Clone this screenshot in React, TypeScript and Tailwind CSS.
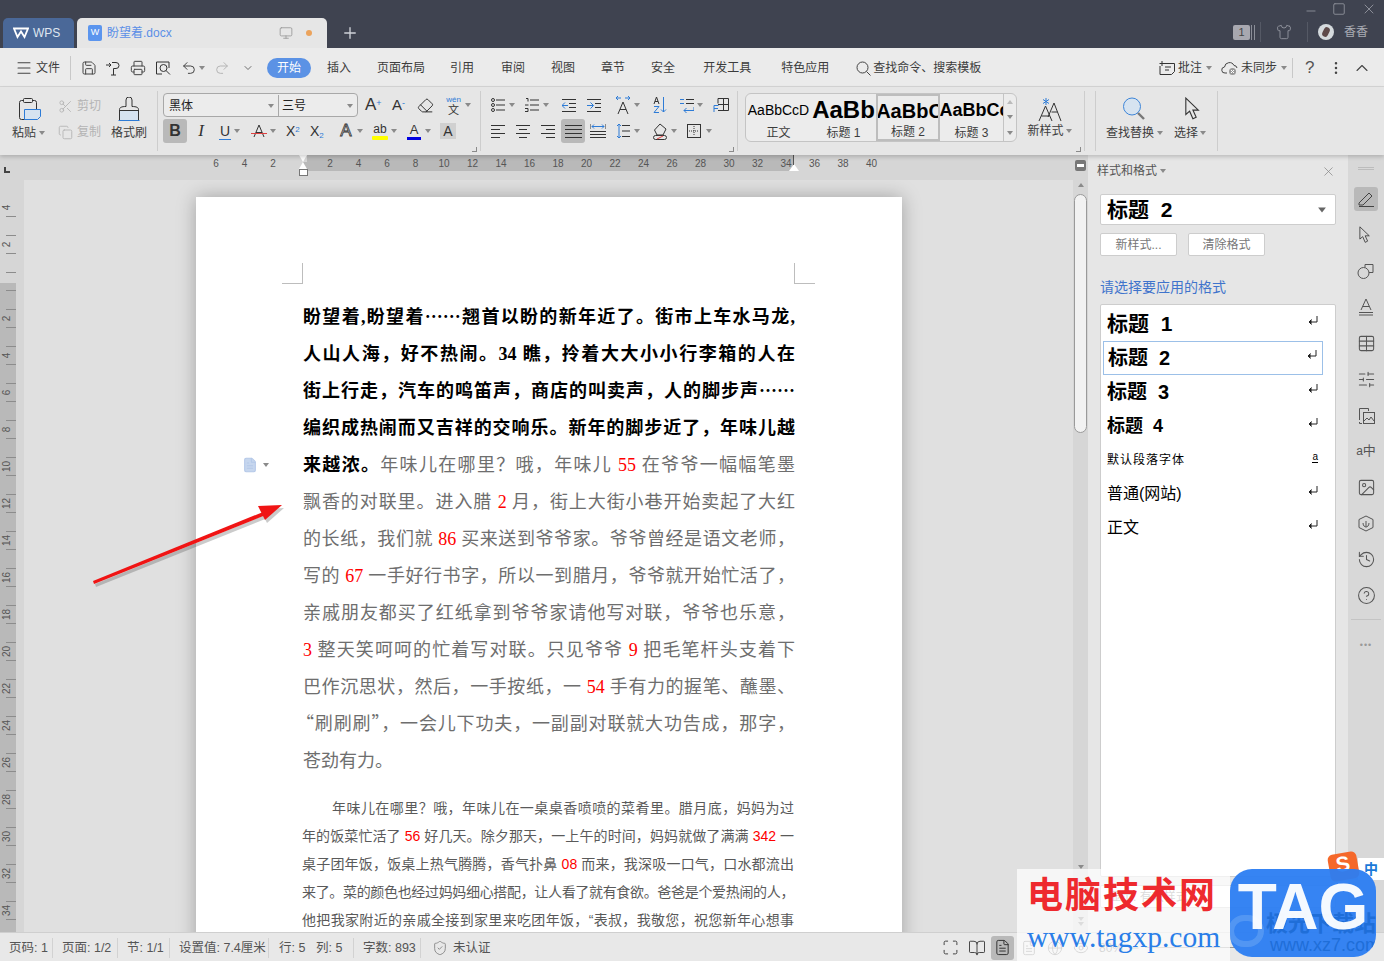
import type { ReactNode } from "react"
import {
  BookOpen,
  ChevronDown,
  ChevronUp,
  CircleHelp,
  EllipsisVertical,
  Eraser,
  Eye,
  FileText,
  Globe,
  History,
  Image as ImageIcon,
  Menu,
  Minus,
  Monitor,
  Plus,
  Printer,
  Redo2,
  Save,
  Scissors,
  Shirt,
  ShieldCheck,
  SlidersHorizontal,
  Square,
  Table,
  Undo2,
  X,
  Copy,
  Maximize,
} from "lucide-react"

const cjk = "font-['Liberation_Sans','Noto_Sans_CJK_SC',sans-serif]"
const serif = "font-['Liberation_Serif','Noto_Sans_CJK_SC',serif]"
const cjkOnly = "font-['Noto_Sans_CJK_SC',sans-serif] leading-[0]"
const BLUE = "#2d7bd6"

function Caret({ className = "" }: { className?: string }) {
  return <span className={`inline-block h-0 w-0 shrink-0 border-x-[3px] border-t-[4px] border-x-transparent border-t-[#8a8a8a] ${className}`} />
}

function R({ children }: { children: ReactNode }) {
  return <span className="text-[#ff0000]">{children}</span>
}

function Corner({ className = "" }: { className?: string }) {
  return <span className={`absolute h-[5px] w-[5px] border-b border-r border-[#8a8a8a] ${className}`} />
}

function Ico({ w = 16, h = 16, className = "", children }: { w?: number; h?: number; className?: string; children: ReactNode }) {
  return (
    <svg width={w} height={h} viewBox={`0 0 ${w} ${h}`} fill="none" stroke="#333" strokeWidth="1" className={`shrink-0 ${className}`}>
      {children}
    </svg>
  )
}

function Lines({ d, w = 14, className = "" }: { d: string; w?: number; className?: string }) {
  return (
    <Ico w={w} h={16} className={className}>
      <path d={d} />
    </Ico>
  )
}

function PasteIcon() {
  return (
    <svg width="24" height="24" viewBox="0 0 24 24" fill="none" className="ml-[6px]">
      <rect x="1.5" y="3.5" width="17" height="19" rx="2" stroke="#333" />
      <rect x="5.5" y="1.5" width="9" height="4" rx="1" fill="#e6e6e6" stroke="#333" />
      <path d="M6.5 12.5h16v7l-3 3h-13Z" fill="#d6e3f0" stroke={BLUE} />
    </svg>
  )
}

function BrushIcon() {
  return (
    <svg width="24" height="24" viewBox="0 0 24 24" fill="none">
      <rect x="2" y="13" width="20" height="10" fill="#d6e3f0" />
      <path d="M1.5 23.5h21" stroke={BLUE} />
      <path d="M2.5 23V12.5c0-2 2-3 6.5-3V3a3 3 0 0 1 6 0v6.5c4.500 0 6.500 1 6.500 3V23M2.500 13.500h19" stroke="#333" />
    </svg>
  )
}

function CursorIcon({ size = 22, className = "" }: { size?: number; className?: string }) {
  return (
    <svg width={size} height={size} viewBox="0 0 22 22" fill="none" stroke="#333" strokeWidth="1" className={`shrink-0 ${className}`}>
      <path d="M3.500 1v15l3.500-3 3 7 3-1.500-3-6.500h5Z" />
    </svg>
  )
}

function WpsLogo() {
  return (
    <svg width="16" height="12" viewBox="0 0 16 12" fill="none" stroke="#fff" strokeWidth="1.8">
      <path d="M1 1.500h14L11.500 10 8 4.500 4.500 10 1 1.500Z" />
    </svg>
  )
}

function ReturnMark() {
  return (
    <svg width="10" height="10" viewBox="0 0 10 10" fill="none" stroke="#222" strokeWidth="1" className="mb-[6px]">
      <path d="M9 0v6H1.500" />
      <path d="M3.500 3.500 1 6l2.500 2.500" fill="#222" />
    </svg>
  )
}

function Lab({ children, className = "" }: { children: ReactNode; className?: string }) {
  return <span className={`shrink-0 whitespace-nowrap text-[12px] leading-[14px] text-[#3c3c3c] ${className}`}>{children}</span>
}

function TitleBar() {
  return (
    <div className="flex h-12 shrink-0 justify-between bg-[#3f4350]">
      <div className="flex items-end pl-[3px]">
        <div className="flex h-[30px] w-[71px] items-center rounded-t-[5px] bg-[#4a6898] pl-[10px]">
          <WpsLogo />
          <span className="ml-[4px] text-[12px] text-[#dfe6f0]">WPS</span>
        </div>
        <div className="ml-[3px] flex h-[30px] w-[250px] items-center rounded-t-[5px] bg-[#e6e6e6] pl-[11px]">
          <span className="flex h-4 w-[14px] items-center justify-center rounded-[2px] bg-[#5b95ee] text-[9px] text-white">W</span>
          <span className="ml-[5px] text-[12px] text-[#5b8fe6]">盼望着.docx</span>
          <Monitor size={14} strokeWidth={1.5} className="ml-[107px] text-[#9a9a9a]" />
          <span className="ml-[13px] h-[6px] w-[6px] rounded-full bg-[#eba35c]" />
        </div>
        <Plus size={18} strokeWidth={1.8} className="mb-[6px] ml-[14px] text-[#cfd2d8]" />
      </div>
      <div className="flex flex-col items-end pr-[7px]">
        <div className="flex h-[19px] items-start pt-[2px] text-[#8b8e98]">
          <Minus size={14} strokeWidth={1.6} className="mt-[2px]" />
          <Square size={14} strokeWidth={1.6} className="ml-[14px]" />
          <X size={16} strokeWidth={1.5} className="ml-[15px] -mt-px" />
        </div>
        <div className="mt-[3px] flex h-[20px] items-center pr-[9px]">
          <span className="flex h-[15px] w-[17px] items-center justify-center rounded-[2px] bg-[#a8a8b0] text-[11px] text-[#444]">1</span>
          <span className="ml-[1px] h-[15px] w-[4px] border-x border-[#8b8e98]" />
          <span className="ml-[5px] h-[20px] w-px bg-[#555965]" />
          <Shirt size={16} strokeWidth={1.5} className="ml-[15px] text-[#8b8e98]" />
          <span className="ml-[15px] h-[20px] w-px bg-[#555965]" />
          <span className="ml-[10px] flex h-4 w-4 items-center justify-center overflow-hidden rounded-full bg-[#d5dadd]">
            <span className="h-[10px] w-[6px] rotate-[25deg] rounded-full bg-[#5e4a4a]" />
          </span>
          <span className="ml-[10px] text-[12px] text-[#a8abb3]">香香</span>
        </div>
      </div>
    </div>
  )
}

function MenuRow() {
  const ic = "shrink-0 text-[#444]"
  return (
    <div className="flex h-[39px] shrink-0 items-center border-b border-[#d6d6d6] bg-[#ebebeb] pl-4 pr-[14px] pt-[2px]">
      <Menu size={18} strokeWidth={1.4} className={`-mx-px ${ic}`} />
      <Lab className="ml-[4px]">文件</Lab>
      <span className="ml-[10px] h-[24px] w-px bg-[#c8c8c8]" />
      <Save size={16} strokeWidth={1.5} className={`ml-[10px] ${ic}`} />
      <Ico w={15} h={16} className="ml-[8px]">
        <path d="M1 5h5M4 3l2 2-2 2M7 2.500h4a3 3 0 0 1 0 6H8.500V15M6 15h5" />
      </Ico>
      <Printer size={16} strokeWidth={1.5} className={`ml-[10px] ${ic}`} />
      <Ico w={16} h={16} className="ml-[9px]">
        <path d="M14 8V2H1.500v12H7" />
        <circle cx="8.500" cy="8" r="3.500" />
        <path d="m11 10.500 4 4" />
      </Ico>
      <Undo2 size={16} strokeWidth={1.5} className={`ml-[10px] ${ic}`} />
      <Caret className="ml-[2px]" />
      <Redo2 size={16} strokeWidth={1.5} className="ml-[9px] shrink-0 text-[#b5b5b5]" />
      <ChevronDown size={12} strokeWidth={1.5} className={`ml-[12px] ${ic}`} />
      <span className="ml-[13px] flex h-5 w-11 shrink-0 items-center justify-center rounded-full bg-[#5b92e5] text-[12px] text-white">开始</span>
      <Lab className="ml-4">插入</Lab>
      <Lab className="ml-[26px]">页面布局</Lab>
      <Lab className="ml-[25px]">引用</Lab>
      <Lab className="ml-[27px]">审阅</Lab>
      <Lab className="ml-[26px]">视图</Lab>
      <Lab className="ml-[26px]">章节</Lab>
      <Lab className="ml-[26px]">安全</Lab>
      <Lab className="ml-[28px]">开发工具</Lab>
      <Lab className="ml-[30px]">特色应用</Lab>
      <Ico w={15} h={15} className="ml-[27px]">
        <circle cx="6.500" cy="6.500" r="5.500" stroke="#444" />
        <path d="m10.500 10.500 4 4" stroke="#444" />
      </Ico>
      <Lab className="ml-[2px]">查找命令、搜索模板</Lab>
      <div className="ml-auto flex items-center">
        <Ico w={16} h={15}>
          <path d="M4 2.500h11.500v8l-3 3H1V5M3 0v5M.5 2.500h5M6 6h6M6 9h4" />
        </Ico>
        <Lab className="ml-[3px]">批注</Lab>
        <Caret className="ml-[4px]" />
        <Ico w={18} h={16} className="ml-[9px]">
          <path d="M6 13H4a3 3 0 0 1-.5-6A5 5 0 0 1 13 5.500a3 3 0 0 1 3 2.500" stroke="#444" />
          <circle cx="11.500" cy="11.500" r="3.500" fill="#999" stroke="none" />
          <path d="m10 10 3 3m0-3-3 3" stroke="#fff" />
        </Ico>
        <Lab className="ml-[2px]">未同步</Lab>
        <Caret className="ml-[4px]" />
        <span className="ml-[5px] h-5 w-px bg-[#c8c8c8]" />
        <span className="ml-[12px] w-[10px] text-[17px] leading-4 text-[#555]">?</span>
        <EllipsisVertical size={16} strokeWidth={1.8} className={`ml-[13px] ${ic}`} />
        <ChevronUp size={20} strokeWidth={1.3} className={`ml-[8px] -mr-[2px] ${ic}`} />
      </div>
    </div>
  )
}

function StyleCell({ w, label, active, children }: { w: string; label: string; active?: boolean; children: ReactNode }) {
  return (
    <div className={`flex h-full shrink-0 flex-col items-center overflow-hidden ${w} ${active ? "border-2 border-[#bdbdbd]" : ""}`}>
      <div className={`flex w-full items-center justify-center overflow-hidden whitespace-nowrap text-black ${active ? "h-[30px]" : "h-[32px]"}`}>{children}</div>
      <Lab className="text-[11px]">{label}</Lab>
    </div>
  )
}

function Toolbar() {
  const dim = "text-[#b4b4b4]"
  const outlineA = "text-[#e6e6e6] [-webkit-text-stroke:0.8px_#333]"
  return (
    <div className="relative z-10 flex h-[68px] shrink-0 bg-[#e6e6e6] shadow-[0_2px_4px_rgba(0,0,0,0.18)]">
      <div className="flex w-[157px] shrink-0 pt-[10px]">
        <div className="ml-3 flex w-[34px] flex-col">
          <PasteIcon />
          <div className="mt-[5px] flex items-center">
            <Lab>粘贴</Lab>
            <Caret className="ml-[3px]" />
          </div>
        </div>
        <div className="ml-3 flex w-[43px] flex-col">
          <div className="mt-px flex h-4 items-center">
            <Scissors size={15} strokeWidth={1.4} className={dim} />
            <span className={`ml-[4px] text-[12px] ${dim}`}>剪切</span>
          </div>
          <div className="mt-[10px] flex h-4 items-center">
            <Copy size={15} strokeWidth={1.4} className={dim} />
            <span className={`ml-[4px] text-[12px] ${dim}`}>复制</span>
          </div>
        </div>
        <div className="ml-[10px] flex w-9 flex-col items-center">
          <BrushIcon />
          <Lab className="mt-[5px]">格式刷</Lab>
        </div>
      </div>
      <span className="mt-1 h-[60px] w-px bg-[#cdcdcd]" />

      <div className="relative flex w-[322px] shrink-0 flex-col gap-[2px] pt-[6px]">
        <div className="flex h-6 items-center">
          <div className="ml-[5px] flex h-6 w-[195px] rounded-[4px] border border-[#a8a8a8] bg-[#ececec] pt-px text-[12px] text-[#222]">
            <div className="flex w-[115px] items-center justify-between border-r border-[#a8a8a8] pl-[5px] pr-[4px]">
              黑体
              <Caret />
            </div>
            <div className="flex flex-1 items-center justify-between pl-[3px] pr-[4px]">
              三号
              <Caret />
            </div>
          </div>
          <span className="ml-[7px] w-[17px] text-[17px] font-light leading-6 text-[#333]">
            A<sup className="text-[9px] text-[#2d7bd6]">+</sup>
          </span>
          <span className="ml-[10px] w-[14px] text-[15px] leading-6 text-[#333]">
            A<sup className="text-[9px] text-[#2d7bd6]">-</sup>
          </span>
          <Eraser size={17} strokeWidth={1.4} className="-mx-px ml-[11px] shrink-0 text-[#333]" />
          <div className="ml-[13px] flex w-[15px] flex-col items-center">
            <span className="text-[8px] leading-[9px] text-[#2d7bd6]">wén</span>
            <span className="text-[11px] leading-[12px] text-[#333]">文</span>
          </div>
          <Caret className="ml-[4px]" />
        </div>
        <div className="flex h-6 items-center text-[#333]">
          <span className="ml-[5px] flex h-6 w-6 items-center justify-center rounded-[3px] bg-[#b9b9b9] text-[16px] font-bold">B</span>
          <span className="ml-2 w-3 text-center font-['Liberation_Serif',serif] text-[17px] italic">I</span>
          <span className="ml-3 w-3 border-b border-[#2d7bd6] text-center text-[14px] leading-[16px]">U</span>
          <Caret className="ml-[3px]" />
          <Ico className="ml-[11px]">
            <path d="M3 14 8 2l5 12M5 9.500h6" />
            <path d="M0 10.500h16" stroke="#e04040" />
          </Ico>
          <Caret className="ml-[3px]" />
          <span className="ml-[10px] w-4 text-[14px] leading-5">
            X<sup className="text-[8px] text-[#2d7bd6]">2</sup>
          </span>
          <span className="ml-2 w-[17px] text-[14px] leading-5">
            X<sub className="text-[8px] text-[#2d7bd6]">2</sub>
          </span>
          <span className={`ml-3 w-[14px] text-center text-[17px] leading-5 ${outlineA}`}>A</span>
          <Caret className="ml-[4px]" />
          <span className="ml-[9px] flex w-4 flex-col items-center">
            <span className="text-[12px] leading-[13px]">ab</span>
            <span className="h-[4px] w-4 rounded-[1px] bg-[#ffff00]" />
          </span>
          <Caret className="ml-[3px]" />
          <span className="ml-[10px] flex w-[14px] flex-col items-center">
            <span className="text-[13px] leading-[14px]">A</span>
            <span className="h-[3px] w-[14px] bg-[#0000e0]" />
          </span>
          <Caret className="ml-[4px]" />
          <span className="ml-[9px] flex h-[16px] w-4 items-center justify-center bg-[#d0d0d0] text-[14px]">A</span>
        </div>
        <Corner className="bottom-[3px] right-[3px]" />
      </div>
      <span className="mt-1 h-[60px] w-px bg-[#cdcdcd]" />

      <div className="relative flex w-[256px] shrink-0 flex-col gap-[2px] pt-[6px]">
        <div className="flex h-6 items-center">
          <Ico w={14} className="ml-[10px]">
            <circle cx="2" cy="3" r="1.500" />
            <circle cx="2" cy="8" r="1.500" />
            <circle cx="2" cy="13" r="1.500" />
            <path d="M5 3h9M5 8h9M5 13h9" />
          </Ico>
          <Caret className="ml-[4px]" />
          <Ico w={14} className="ml-[10px]">
            <path d="M1 1.500h2v3M0 8h3.500M0 11.500h3v3H0M5 3h9M5 8h9M5 13h9" />
          </Ico>
          <Caret className="ml-[4px]" />
          <Ico w={14} className="ml-[13px]">
            <path d="M0 2.500h14M7 6.500h7M7 10.500h7M0 14.500h14" />
            <path d="M0 8.500h6M3 5.500l-3 3 3 3" stroke={BLUE} />
          </Ico>
          <Ico w={14} className="ml-[11px]">
            <path d="M0 2.500h14M8 6.500h6M8 10.500h6M0 14.500h14" />
            <path d="M0 8.500h6M3.500 5.500l3 3-3 3" stroke={BLUE} />
          </Ico>
          <Ico h={20} className="ml-[14px]">
            <path d="M3 19 8 7l5 12M5 14.500h6" />
            <path d="M1 3h5M3 1 1 3l2 2M10 3h5M13 1l2 2-2 2" stroke={BLUE} />
          </Ico>
          <Caret className="ml-[3px]" />
          <Ico w={14} h={18} className="ml-[13px]">
            <path d="M1 8 3.500 1 6 8M2 5.500h3" />
            <path d="M1 10.500h5l-5 6h5M10.500 1v15M8 13.500l2.500 2.500 2.500-2.500" stroke={BLUE} />
          </Ico>
          <Ico w={14} h={18} className="ml-[13px]">
            <path d="M6 3.500h8M6 7.500h8" />
            <path d="M0 3.500h4M0 7.500h4M14 11v3.500H4M6.500 12 4 14.500 6.500 17" stroke={BLUE} />
          </Ico>
          <Caret className="ml-[3px]" />
          <Ico h={16} className="ml-[10px]">
            <path d="M5 1.500h10.500v12H5M5 1.500v5M5 7.500h10.500M10.500 1.500v12" />
            <path d="M1 15V8.500h4.500M1 11.500h4" stroke={BLUE} />
          </Ico>
        </div>
        <div className="flex h-6 items-center">
          <Lines d="M0 2.500h14M0 6.500h9M0 10.500h14M0 14.500h9" className="ml-[10px]" />
          <Lines d="M0 2.500h14M3 6.500h8M0 10.500h14M3 14.500h8" className="ml-[11px]" />
          <Lines d="M0 2.500h14M5 6.500h9M0 10.500h14M5 14.500h9" className="ml-[11px]" />
          <span className="ml-[6px] flex h-6 w-6 items-center justify-center rounded-[3px] bg-[#b9b9b9]">
            <Lines w={17} d="M0 2.500h17M0 6.500h17M0 10.500h17M0 14.500h17" />
          </span>
          <Ico className="ml-[5px]">
            <path d="M0 1v5M16 1v5" />
            <path d="M2 3.500h12M4 1.500l-2 2 2 2M12 1.500l2 2-2 2" stroke={BLUE} />
            <path d="M0 8.500h16M0 11.500h16M0 14.500h16" />
          </Ico>
          <Ico w={14} h={18} className="ml-[10px]">
            <path d="M3 2v14M1 4l2-2 2 2M1 14l2 2 2-2" stroke={BLUE} />
            <path d="M6 3.500h8M6 9h8M6 14.500h8" />
          </Ico>
          <Caret className="ml-[4px]" />
          <Ico h={20} className="ml-3">
            <path d="M2.500 9 8 3l6 5-3 6H5Z" />
            <rect x="1.500" y="14.500" width="13" height="4" rx="2" />
            <path d="m5 18 6-3" stroke="#e04040" />
          </Ico>
          <Caret className="ml-[3px]" />
          <Ico className="ml-[9px]">
            <rect x="1.500" y="1.500" width="13" height="13" />
            <path d="M8 3v10M3 8h10" strokeDasharray="1 1" />
          </Ico>
          <Caret className="ml-[4px]" />
        </div>
        <Corner className="bottom-[3px] right-[3px]" />
      </div>
      <span className="mt-1 h-[60px] w-px bg-[#cdcdcd]" />

      <div className="relative flex w-[346px] shrink-0 pt-[6px]">
        <div className="ml-[7px] flex h-[49px] w-[272px] overflow-hidden rounded-[6px] border border-[#c4c4c4] bg-[#ececec]">
          <StyleCell w="w-[65px]" label="正文">
            <span className="text-[14px]">AaBbCcD</span>
          </StyleCell>
          <StyleCell w="w-[65px]" label="标题 1">
            <span className="text-[24px] font-bold">AaBb</span>
          </StyleCell>
          <StyleCell w="w-[64px]" label="标题 2" active>
            <span className="ml-[3px] text-[20px] font-bold">AaBbC</span>
          </StyleCell>
          <StyleCell w="w-[63px]" label="标题 3">
            <span className="ml-[6px] text-[18px] font-bold">AaBbCc</span>
          </StyleCell>
          <div className="flex w-[13px] flex-col items-center justify-around border-l border-[#c4c4c4]">
            <Caret className="rotate-180 opacity-50" />
            <Caret />
            <Caret />
          </div>
        </div>
        <div className="ml-[10px] flex w-[45px] flex-col items-center pt-[3px]">
          <Ico w={24} h={26} className="-mb-[1px]">
            <path d="M1 25 7.500 10 14 25M3.500 20h8M10 21l6-14 7 18M13.500 16h6" />
            <path d="M8 2v7M5 3.500l6 4M11 3.500l-6 4" stroke={BLUE} />
          </Ico>
          <div className="mt-[3px] flex items-center">
            <Lab>新样式</Lab>
            <Caret className="ml-[2px]" />
          </div>
        </div>
        <Corner className="bottom-[3px] right-[3px]" />
      </div>
      <span className="mt-1 h-[60px] w-px bg-[#cdcdcd]" />
      <span className="ml-[10px] mt-1 h-[60px] w-px bg-[#cdcdcd]" />

      <div className="flex w-[121px] shrink-0 pt-[10px]">
        <div className="ml-[10px] flex w-[58px] flex-col">
          <svg width="24" height="24" viewBox="0 0 24 24" fill="none" className="ml-[16px]">
            <circle cx="10" cy="9.500" r="8.500" fill="#d6e3f0" stroke="#3d85d8" />
            <path d="m16 16 6 6" stroke="#777" strokeWidth="2.400" />
          </svg>
          <div className="mt-[5px] flex items-center">
            <Lab>查找替换</Lab>
            <Caret className="ml-[3px]" />
          </div>
        </div>
        <div className="ml-[10px] flex w-[32px] flex-col">
          <CursorIcon size={24} className="ml-[8px]" />
          <div className="mt-[5px] flex items-center">
            <Lab>选择</Lab>
            <Caret className="ml-[2px]" />
          </div>
        </div>
      </div>
      <span className="mt-1 h-[60px] w-px bg-[#cdcdcd]" />
    </div>
  )
}

const hNums = ["6", "4", "2", "", "2", "4", "6", "8", "10", "12", "14", "16", "18", "20", "22", "24", "26", "28", "30", "32", "34", "36", "38", "40"]
const vNums = ["4", "2", "", "2", "4", "6", "8", "10", "12", "14", "16", "18", "20", "22", "24", "26", "28", "30", "32", "34", "36"]

function HRuler() {
  return (
    <div className="relative h-[25px] shrink-0 bg-[#d6d6d6]">
      <div className="flex h-4">
        <div className="w-[303px] shrink-0" />
        <div className="w-[491px] shrink-0 bg-[#b9b9b9]" />
      </div>
      <div className="absolute left-[201.75px] top-0 flex h-4 items-center">
        {hNums.map((n, i) => (
          <span key={i} className="w-[28.5px] text-center text-[10px] text-[#555]">
            {n}
          </span>
        ))}
      </div>
      <span className="absolute left-[4px] top-[12px] h-[6px] w-[6px] border-b-2 border-l-2 border-[#444]" />
      <div className="absolute left-[298px] top-0 flex w-[10px] flex-col items-center">
        <span className="h-0 w-0 border-x-[4px] border-t-[7px] border-x-[#d6d6d6] border-t-white" />
        <span className="h-0 w-0 border-x-[4px] border-b-[7px] border-x-transparent border-b-white" />
        <span className="h-[7px] w-[9px] border border-[#777] bg-white" />
      </div>
      <span className="absolute left-[789px] top-[9px] h-0 w-0 border-x-[5px] border-b-[7px] border-x-transparent border-b-white" />
      <span className="absolute left-[793px] top-0 h-[10px] w-px bg-[#555]" />
    </div>
  )
}

function VRulerMarks() {
  return (
    <div className="absolute left-0 top-[18.75px] w-4">
      {vNums.map((n, i) => (
        <div key={i}>
          <div className="ml-[6px] flex h-[18.5px] items-center justify-center border-b border-[#8c8c8c]">
            <span className="-ml-[8px] -rotate-90 text-[10px] text-[#555]">{n}</span>
          </div>
          <div className="ml-[6px] h-[18.5px] border-b border-[#8c8c8c]" />
        </div>
      ))}
    </div>
  )
}

function Line({ children, bold, last }: { children: ReactNode; bold?: boolean; last?: boolean }) {
  return <div className={`h-[37px] whitespace-nowrap ${last ? "" : "[text-align-last:justify]"} ${bold ? "font-bold text-black" : ""}`}>{children}</div>
}

function SmallLine({ children, first, tight }: { children: ReactNode; first?: boolean; tight?: boolean }) {
  return <div className={`h-7 whitespace-nowrap [text-align-last:justify] ${first ? "pl-[30px]" : ""} ${tight ? "tracking-[-0.4px]" : ""}`}>{children}</div>
}

function Page() {
  return (
    <div className={`relative ml-[172px] mt-[17px] min-h-[900px] w-[706px] bg-white shadow-[0_0_18px_rgba(0,0,0,0.28)] ${serif}`}>
      <div className="flex pt-[66px]">
        <span className="ml-[86px] h-[21px] w-[21px] border-b border-r border-[#bdbdbd]" />
        <span className="ml-[491px] h-[21px] w-[21px] border-b border-l border-[#bdbdbd]" />
      </div>
      <div className="ml-[107px] mt-[15px] w-[492px] text-[18px] leading-[37px] text-[#6e6e6e]">
        <Line bold>
          盼望着,盼望着<span className={cjkOnly}>……</span>翘首以盼的新年近了。街市上车水马龙,
        </Line>
        <Line bold>人山人海，好不热闹。34 瞧，拎着大大小小行李箱的人在</Line>
        <Line bold>
          街上行走，汽车的鸣笛声，商店的叫卖声，人的脚步声<span className={cjkOnly}>……</span>
        </Line>
        <Line bold>编织成热闹而又吉祥的交响乐。新年的脚步近了，年味儿越</Line>
        <Line>
          <b className="text-black">来越浓。</b>年味儿在哪里？哦，年味儿 <R>55</R> 在爷爷一幅幅笔墨
        </Line>
        <Line>
          飘香的对联里。进入腊 <R>2</R> 月，街上大街小巷开始卖起了大红
        </Line>
        <Line>
          的长纸，我们就 <R>86</R> 买来送到爷爷家。爷爷曾经是语文老师，
        </Line>
        <Line>
          写的 <R>67</R> 一手好行书字，所以一到腊月，爷爷就开始忙活了，
        </Line>
        <Line>亲戚朋友都买了红纸拿到爷爷家请他写对联，爷爷也乐意，</Line>
        <Line>
          <R>3</R> 整天笑呵呵的忙着写对联。只见爷爷 <R>9</R> 把毛笔杆头支着下
        </Line>
        <Line>
          巴作沉思状，然后，一手按纸，一 <R>54</R> 手有力的握笔、蘸墨、
        </Line>
        <Line>
          <span className={`-ml-[7px] ${cjkOnly}`}>“</span>刷刷刷<span className={cjkOnly}>”</span>，一会儿下功夫，一副副对联就大功告成，那字，
        </Line>
        <Line last>苍劲有力。</Line>
      </div>
      <div className={`ml-[106px] mt-[14px] w-[492px] text-[14px] leading-7 text-[#5a5a5a] ${cjk}`}>
        <SmallLine first>年味儿在哪里？哦，年味儿在一桌桌香喷喷的菜肴里。腊月底，妈妈为过</SmallLine>
        <SmallLine>
          年的饭菜忙活了 <R>56</R> 好几天。除夕那天，一上午的时间，妈妈就做了满满 <R>342</R> 一
        </SmallLine>
        <SmallLine>
          桌子团年饭，饭桌上热气腾腾，香气扑鼻 <R>08</R> 而来，我深吸一口气，口水都流出
        </SmallLine>
        <SmallLine tight>来了。菜的颜色也经过妈妈细心搭配，让人看了就有食欲。爸爸是个爱热闹的人，</SmallLine>
        <SmallLine>他把我家附近的亲戚全接到家里来吃团年饭，“表叔，我敬您，祝您新年心想事</SmallLine>
      </div>
      <div className="absolute left-[46px] top-[260px] flex items-center">
        <FileText size={16} strokeWidth={1.6} className="fill-[#c6d6ee] text-[#b4c8e8]" />
        <Caret className="ml-[5px]" />
      </div>
    </div>
  )
}

function Scrollbar() {
  return (
    <div className="flex w-[15px] shrink-0 flex-col items-center bg-[#d6d6d6]">
      <span className="mt-[5px] flex h-[11px] w-[11px] items-center justify-center rounded-[2px] bg-[#777]">
        <span className="h-[3px] w-[7px] bg-white" />
      </span>
      <Caret className="mt-[12px] rotate-180" />
      <div className="mt-[7px] h-[239px] w-[13px] rounded-full border border-[#9a9a9a] bg-[#f2f2f2]" />
      <Caret className="mt-[432px]" />
      <Caret className="mt-[48px]" />
      <Caret className="mt-px" />
    </div>
  )
}

const styleItems = [
  { label: "标题  1", cls: "text-[21px] font-bold" },
  { label: "标题  2", cls: "text-[20px] font-bold", sel: true },
  { label: "标题  3", cls: "text-[20px] font-bold" },
  { label: "标题  4", cls: "text-[18px] font-bold" },
]

function StylesPanel() {
  return (
    <div className="flex w-[260px] shrink-0 flex-col bg-[#e6e6e6] pl-3 pr-3">
      <div className="mt-[8px] flex h-4 items-center">
        <span className="-ml-[3px] text-[12px] text-[#555]">样式和格式</span>
        <Caret className="ml-[3px]" />
        <X size={15} strokeWidth={1.2} className="ml-auto mr-0 text-[#888]" />
      </div>
      <div className="mt-[15px] flex h-[31px] w-[236px] items-center justify-between rounded-[2px] border border-[#cdcdcd] bg-white pl-[6px] pr-[10px]">
        <span className="text-[21px] font-bold text-black">标题&nbsp;&nbsp;2</span>
        <Caret className="scale-[1.3] border-t-[#666]" />
      </div>
      <div className="mt-2 flex">
        <button className="h-[23px] w-[77px] rounded-[2px] border border-[#cdcdcd] bg-white text-[12px] text-[#777]">新样式...</button>
        <button className="ml-[11px] h-[23px] w-[77px] rounded-[2px] border border-[#cdcdcd] bg-white text-[12px] text-[#777]">清除格式</button>
      </div>
      <div className="mt-[22px] text-[14px] leading-[18px] text-[#3f74cc]">请选择要应用的格式</div>
      <div className="mt-[8px] h-[573px] w-[236px] rounded-[2px] border border-[#cdcdcd] bg-white pt-[2px]">
        {styleItems.map((s, i) => (
          <div key={i} className="flex h-[34px] items-center pr-[12px]">
            <div className={`ml-[2px] flex h-[34px] w-[220px] items-center justify-between pl-[4px] pr-[5px] ${s.sel ? "border border-[#9cc0e8]" : ""}`}>
              <span className={`whitespace-pre text-black ${s.cls}`}>{s.label}</span>
              <ReturnMark />
            </div>
          </div>
        ))}
        <div className="ml-[6px] flex h-[34px] w-[216px] items-center justify-between pr-[5px]">
          <span className="text-[12px] tracking-[1px] text-black">默认段落字体</span>
          <span className="mb-[6px] border-b border-black text-[10px] leading-[10px] text-black">a</span>
        </div>
        <div className="ml-[6px] flex h-[34px] w-[216px] items-center justify-between pr-[5px]">
          <span className="text-[16px] text-black">普通(网站)</span>
          <ReturnMark />
        </div>
        <div className="ml-[6px] flex h-[34px] w-[216px] items-center justify-between pr-[5px]">
          <span className="text-[16px] text-black">正文</span>
          <ReturnMark />
        </div>
      </div>
      <div className="mt-2 flex h-[23px] w-[236px] items-center rounded-[2px] border border-[#cdcdcd] bg-white pl-[8px] text-[12px] text-[#888]">显示: 有效样式</div>
    </div>
  )
}

function SideBar() {
  const c = "text-[#555]"
  const st = "#555"
  const icons = [
    <CursorIcon size={18} />,
    <Ico w={18} h={18}>
      <circle cx="6.500" cy="11" r="5.500" stroke={st} />
      <path d="M8 5.500V2.500h8v8h-4" stroke={st} />
    </Ico>,
    <Ico w={16} h={18}>
      <path d="M3 12 8 1l5 11M5 8.500h6M1 14.500h14M1 17h14" stroke={st} />
    </Ico>,
    <Table size={19} strokeWidth={1.3} className={c} />,
    <SlidersHorizontal size={19} strokeWidth={1.3} className={c} />,
    <Ico w={17} h={17}>
      <path d="M1.500 13V1.500h9V4M1.500 15v1.500H4" stroke={st} />
      <rect x="5.500" y="5.500" width="11" height="11" stroke={st} />
      <path d="m6 14 3-3 2 2 2-3 3 4" stroke={st} />
    </Ico>,
    <span className="flex items-end text-[12px] leading-[14px] text-[#555]">
      a<span className="text-[13px]">中</span>
    </span>,
    <ImageIcon size={19} strokeWidth={1.3} className={c} />,
    <Ico w={16} h={17}>
      <path d="M8 1 15 4.500v8L8 16l-7-3.500v-8Z" stroke={st} />
      <path d="M5 8c0 3 2 4 3 4s3-1 3-4M8 12V6" stroke={st} />
    </Ico>,
    <History size={19} strokeWidth={1.3} className={c} />,
    <CircleHelp size={19} strokeWidth={1.3} className={c} />,
  ]
  return (
    <div className="flex w-9 shrink-0 flex-col items-center bg-[#d8d8d8]">
      <span className="mt-3 h-[3px] w-4 shrink-0 border-y border-[#bcbcbc]" />
      <span className="mt-[17px] flex h-6 w-6 shrink-0 items-center justify-center rounded-[3px] bg-[#b9b9b9]">
        <Ico w={17} h={17}>
          <path d="M1 12 11 2l3 3L5 14H1Z M1 15.500h15" stroke="#444" />
        </Ico>
      </span>
      {icons.map((ic, i) => (
        <span key={i} className={`flex h-[36px] shrink-0 items-center justify-center ${i === 0 ? "mt-[6px]" : ""}`}>
          {ic}
        </span>
      ))}
      <span className="mt-[6px] h-px w-[30px] bg-[#c4c4c4]" />
      <span className="mt-[22px] text-[9px] leading-[6px] tracking-[1px] text-[#999]">•••</span>
    </div>
  )
}

function Sep({ className = "" }: { className?: string }) {
  return <span className={`h-[20px] w-px shrink-0 bg-[#d2d2d2] ${className}`} />
}

function StatusBar() {
  const t = "shrink-0 whitespace-nowrap text-[12.5px] leading-[16px] text-[#555]"
  return (
    <div className="flex h-[29px] shrink-0 items-center border-t border-[#cfcfcf] bg-[#e8e8e8] pl-[9px] pt-px">
      <span className={`${t} w-[37px]`}>页码: 1</span>
      <Sep className="ml-[6px]" />
      <span className={`${t} ml-[9px] w-[50px]`}>页面: 1/2</span>
      <Sep className="ml-[5px]" />
      <span className={`${t} ml-[9px] w-[37px]`}>节: 1/1</span>
      <Sep className="ml-[5px]" />
      <span className={`${t} ml-[9px] w-[85px]`}>设置值: 7.4厘米</span>
      <Sep className="ml-[4px]" />
      <span className={`${t} ml-[10px] w-[26px]`}>行: 5</span>
      <span className={`${t} ml-[11px] w-[26px]`}>列: 5</span>
      <Sep className="ml-[11px]" />
      <span className={`${t} ml-[9px] w-[52px]`}>字数: 893</span>
      <Sep className="ml-[5px]" />
      <ShieldCheck size={16} strokeWidth={1.4} className="ml-[11px] shrink-0 text-[#888]" />
      <span className={`${t} ml-[5px] w-[36px]`}>未认证</span>
      <Maximize size={17} strokeWidth={1.4} className="ml-[453px] shrink-0 text-[#444]" />
      <BookOpen size={18} strokeWidth={1.3} className="ml-[9px] shrink-0 text-[#444]" />
      <span className="ml-[5px] flex h-6 w-[23px] shrink-0 items-center justify-center rounded-[3px] bg-[#b9b9b9]">
        <FileText size={17} strokeWidth={1.4} className="text-[#333]" />
      </span>
      <FileText size={16} strokeWidth={1.4} className="ml-[7px] shrink-0 text-[#777]" />
      <Globe size={16} strokeWidth={1.4} className="ml-[10px] shrink-0 text-[#777]" />
      <Eye size={16} strokeWidth={1.4} className="ml-[10px] shrink-0 text-[#777]" />
      <span className="ml-[10px] shrink-0 text-[12px] text-[#777]">80%</span>
      <Minus size={14} strokeWidth={1.4} className="ml-[4px] shrink-0 text-[#777]" />
      <span className="ml-[4px] h-px w-[90px] shrink-0 bg-[#999]" />
    </div>
  )
}

function RedArrow() {
  return (
    <svg className="absolute left-[88px] top-[498px]" width="200" height="92" viewBox="88 498 200 92">
      <g transform="translate(2 3)" opacity="0.28" fill="#444">
        <path d="M93 581 268 510l1.500 3.500L94 584Z" />
        <path d="M282 505 258 506l7 14Z" />
      </g>
      <path d="M93 581 268 510l1.500 3.500L94 584Z" fill="#f01414" />
      <path d="M282 505 258 506l7 14Z" fill="#f01414" />
    </svg>
  )
}

function Watermark() {
  return (
    <>
      <div className="absolute left-[1017px] top-[869px] flex h-[92px] w-[213px] flex-col items-start bg-white/70 pl-[10px]">
        <span className={`mt-[5px] whitespace-nowrap text-[36px] font-bold leading-[44px] tracking-[2px] text-[#ee2a2e] ${cjk}`}>电脑技术网</span>
        <span className="mt-[2px] whitespace-nowrap font-['Liberation_Serif',serif] text-[29.5px] leading-[34px] text-[#2a7ee8]">www.tagxp.com</span>
      </div>
      <span className="absolute left-[1358px] top-[858px] flex h-[22px] w-[26px] items-center justify-center bg-white text-[14px] font-bold leading-4 text-[#1a78d8]">中</span>
      <span className="absolute left-[1329px] top-[853px] flex h-[27px] w-[29px] rotate-[-10deg] items-start justify-center rounded-[5px] bg-[#f5682a] text-[21px] font-bold leading-[22px] text-white">S</span>
      <div className="absolute left-[1230px] top-[869px] flex h-[88px] w-[146px] flex-col items-center overflow-hidden rounded-[22px] bg-[#2b7df2]/95">
        <span className="absolute left-[-2px] top-[46px] h-[32px] w-[36px] rounded-full border-[6px] border-[#7fb4f5]/40" />
        <span className={`absolute left-[36px] top-[42px] whitespace-nowrap text-[22px] font-bold leading-[26px] text-[#1f6ed8] ${cjk}`}>极光下载站</span>
        <span className="absolute left-[40px] top-[66px] whitespace-nowrap text-[18px] leading-[20px] text-[#1f6ed8]">www.xz7.com</span>
        <span className="relative mt-[6px] h-[64px] font-['Liberation_Sans',sans-serif] text-[64px] font-bold leading-[64px] text-white/95">TAG</span>
      </div>
    </>
  )
}

export default function App() {
  return (
    <div className={`relative flex h-[961px] w-[1384px] flex-col overflow-hidden bg-[#e0e0e0] ${cjk}`}>
      <TitleBar />
      <MenuRow />
      <Toolbar />
      <div className="flex min-h-0 flex-1">
        <div className="flex w-[1073px] shrink-0 flex-col">
          <HRuler />
          <div className="flex min-h-0 flex-1">
            <div className="relative w-6 shrink-0 overflow-hidden bg-[#d6d6d6]">
              <div className="absolute left-0 top-[103px] h-[700px] w-4 bg-[#b9b9b9]" />
              <VRulerMarks />
            </div>
            <div className="min-w-0 flex-1 overflow-hidden bg-[#e0e0e0]">
              <Page />
            </div>
          </div>
        </div>
        <Scrollbar />
        <StylesPanel />
        <SideBar />
      </div>
      <StatusBar />
      <RedArrow />
      <Watermark />
    </div>
  )
}
